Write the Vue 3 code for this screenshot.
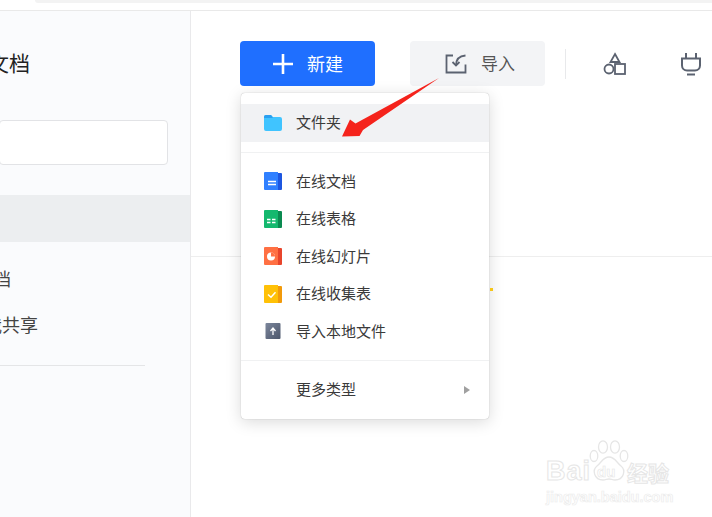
<script setup>
const items = [
  { label: '在线文档', kind: 'doc' },
  { label: '在线表格', kind: 'sheet' },
  { label: '在线幻灯片', kind: 'slide' },
  { label: '在线收集表', kind: 'form' },
  { label: '导入本地文件', kind: 'upload' },
]
</script>

<template>
  <div class="page">
    <header class="topbar"><div class="address"></div></header>
    <div class="body">
      <aside class="sidebar">
        <h1 class="title">文档</h1>
        <div class="search"></div>
        <div class="selected"></div>
        <div class="nav nav-docs">我的文档</div>
        <div class="nav nav-shared">与我共享</div>
        <div class="side-rule"></div>
      </aside>
      <main class="main">
        <div class="toolbar">
          <button class="btn primary">
            <svg width="22" height="22" viewBox="0 0 22 22"><path d="M11 1v20M1 11h20" stroke="#fff" stroke-width="2.600" fill="none"/></svg>
            <span>新建</span>
          </button>
          <button class="btn secondary">
            <svg width="22" height="22" viewBox="0 0 22 22" fill="none" stroke="#5b6270" stroke-width="1.800">
              <path d="M8 2.500H1.500v17h19v-8"/>
              <path d="M20.500 2.500C14 3 11 6.500 11 12.500"/>
              <path d="M7.500 9l3.500 3.500L14.500 9"/>
            </svg>
            <span>导入</span>
          </button>
          <div class="vrule"></div>
          <svg class="tool shapes" width="23" height="24" viewBox="0 0 23 24" fill="none" stroke="#5b6270" stroke-width="1.800">
            <path d="M12 2l4.500 8h-9z"/>
            <circle cx="6" cy="17" r="4.500"/>
            <rect x="12" y="12" width="10" height="10"/>
          </svg>
          <svg class="tool plug" width="22" height="24" viewBox="0 0 22 24" fill="none" stroke="#5b6270" stroke-width="2">
            <path d="M6 1v6M16 1v6" />
            <path d="M2 6.500h18v7a5 5 0 0 1-5 5H7a5 5 0 0 1-5-5z"/>
            <path d="M7 22.500h8"/>
          </svg>
        </div>
        <div class="main-rule"></div>
      </main>
    </div>

    <div class="menu">
      <div class="row active">
        <svg class="icon" width="20" height="18" viewBox="0 0 20 18">
          <path d="M1 3a2 2 0 0 1 2-2h5l2 2h7a2 2 0 0 1 2 2v10a2 2 0 0 1-2 2H3a2 2 0 0 1-2-2z" fill="#40c4ff"/>
          <path d="M1 3a2 2 0 0 1 2-2h5l2 3H1z" fill="#2a9ff0"/>
        </svg>
        <span>文件夹</span>
      </div>
      <div class="menu-rule"></div>
      <div v-for="item in items" :key="item.kind" class="row">
        <svg class="icon" width="20" height="20" viewBox="0 0 20 20">
          <template v-if="item.kind === 'doc'">
            <rect x="3" y="2" width="16" height="17" rx="1" fill="#1d56e0"/>
            <path d="M1 2a1 1 0 0 1 1-1h13v18H2a1 1 0 0 1-1-1z" fill="#3080ff"/>
            <path d="M5 10.500h8M5 13.500h8" stroke="#fff" stroke-width="1.400"/>
          </template>
          <template v-else-if="item.kind === 'sheet'">
            <rect x="3" y="2" width="16" height="17" rx="1" fill="#0a8a50"/>
            <path d="M1 2a1 1 0 0 1 1-1h13v18H2a1 1 0 0 1-1-1z" fill="#14b86e"/>
            <path d="M4 10.500h3.500M9 10.500h3.500M4 13.500h3.500M9 13.500h3.500" stroke="#fff" stroke-width="1.400"/>
          </template>
          <template v-else-if="item.kind === 'slide'">
            <rect x="3" y="2" width="16" height="17" rx="1" fill="#e8452c"/>
            <path d="M1 2a1 1 0 0 1 1-1h13v18H2a1 1 0 0 1-1-1z" fill="#ff7043"/>
            <circle cx="8" cy="10.500" r="4" fill="#fff"/>
            <path d="M8 10.500V6.500a4 4 0 0 1 4 4z" fill="#ff7043"/>
          </template>
          <template v-else-if="item.kind === 'form'">
            <rect x="3" y="2" width="16" height="17" rx="1" fill="#f29a0a"/>
            <path d="M1 2a1 1 0 0 1 1-1h13v18H2a1 1 0 0 1-1-1z" fill="#ffc107"/>
            <path d="M5 10.500l3 2.800 4.500-5" stroke="#fff" stroke-width="1.500" fill="none"/>
          </template>
          <template v-else>
            <defs>
              <linearGradient id="upg" x1="0" y1="0" x2="1" y2="1">
                <stop offset="0" stop-color="#7c879c"/>
                <stop offset="1" stop-color="#4c566b"/>
              </linearGradient>
            </defs>
            <rect x="2.500" y="2" width="15" height="16" rx="1" fill="url(#upg)"/>
            <path d="M10 14V8M7.500 10l2.500-3 2.500 3" stroke="#fff" stroke-width="1.300" fill="none"/>
          </template>
        </svg>
        <span>{{ item.label }}</span>
      </div>
      <div class="menu-rule"></div>
      <div class="row more">
        <span class="more-label">更多类型</span>
        <i class="caret"></i>
      </div>
    </div>

    <i class="speck"></i>

    <svg class="pointer" width="100" height="62" viewBox="340 76 100 62">
      <path d="M342 136.500L350 119.500L355.500 123.500L439 78L363 130L359.500 136z" fill="#f5231c"/>
    </svg>

    <div class="watermark">
      <svg class="paw" width="40" height="42" viewBox="0 0 40 42" fill="#fff" stroke="#e6e6e6" stroke-width="1.300">
        <ellipse cx="5" cy="16" rx="3.800" ry="5.500"/>
        <ellipse cx="14" cy="7" rx="4.500" ry="6.200"/>
        <ellipse cx="26" cy="7" rx="4.500" ry="6.200"/>
        <ellipse cx="35" cy="16" rx="3.800" ry="5.500"/>
        <path d="M20 17c6 0 7 5 12 9 5 4 3 14-6 14-2.500 0-4-1-6-1s-3.500 1-6 1c-9 0-11-10-6-14 5-4 6-9 12-9z"/>
      </svg>
      <div class="wm-line">
        <span class="wm-bai">Bai</span>
        <span class="wm-du">du</span>
        <span class="wm-cn">经验</span>
      </div>
      <div class="wm-url">jingyan.baidu.com</div>
    </div>
  </div>
</template>

<style>
html, body { margin: 0; padding: 0; background: #fff; }
</style>

<style scoped>
.page {
  position: relative;
  width: 712px;
  height: 517px;
  overflow: hidden;
  background: #fff;
  font-family: "Noto Sans CJK SC", "Liberation Sans", sans-serif;
  color: #333;
}
.topbar {
  height: 10px;
  border-bottom: 1px solid #e9e9e9;
}
.address {
  height: 3px;
  margin-left: 35px;
  background: #f3f3f3;
  border-bottom-left-radius: 4px;
}
.body { display: flex; height: 506px; }
.sidebar {
  width: 190px;
  flex: none;
  background: #fafbfd;
  border-right: 1px solid #e9e9eb;
  overflow: hidden;
}
.title {
  margin: 36px 0 0 -12px;
  font-size: 21px;
  line-height: 30px;
  font-weight: 400;
  color: #222;
  white-space: nowrap;
}
.search {
  box-sizing: border-box;
  width: 169px;
  height: 45px;
  margin: 43px 0 0 -1px;
  background: #fff;
  border: 1px solid #e2e3e6;
  border-radius: 4px;
}
.selected { height: 47px; margin-top: 30px; background: #eceef0; }
.nav {
  font-size: 18px;
  line-height: 26px;
  color: #444;
  white-space: nowrap;
}
.nav-docs { margin: 23px 0 0 -61px; }
.nav-shared { margin: 20px 0 0 -34px; }
.side-rule { width: 145px; height: 1px; margin-top: 28px; background: #e4e5e7; }

.main { flex: 1; min-width: 0; }
.toolbar {
  display: flex;
  align-items: center;
  height: 45px;
  margin: 30px 0 0 49px;
}
.btn {
  display: flex;
  align-items: center;
  justify-content: center;
  box-sizing: border-box;
  width: 135px;
  height: 45px;
  padding: 0;
  border: 0;
  border-radius: 4px;
  font: inherit;
  font-size: 17px;
}
.btn span { line-height: 24px; margin-bottom: 2px; }
.primary { gap: 13px; background: #1f6fff; color: #fff; font-size: 18px; }
.secondary { gap: 14px; margin-left: 35px; padding-left: 5px; background: #f3f4f6; color: #555; }
.vrule { width: 1px; height: 30px; margin-left: 20px; background: #e8e9eb; }
.tool { flex: none; }
.shapes { margin-left: 37px; }
.plug { margin-left: 54px; }
.main-rule { height: 1px; margin-top: 170px; background: #eeeeee; }

.menu {
  position: absolute;
  left: 241px;
  top: 93px;
  box-sizing: border-box;
  width: 248px;
  height: 326px;
  padding: 11px 0;
  background: #fff;
  border-radius: 4px;
  box-shadow: 0 0 1px rgba(0,0,0,.35), 0 3px 16px rgba(0,0,0,.15);
  font-size: 15px;
  color: #3a3a3a;
}
.row {
  display: flex;
  align-items: center;
  height: 37.5px;
  padding-left: 22px;
  white-space: nowrap;
}
.row.active { background: #f1f2f4; }
.icon { flex: none; margin-right: 13px; }
.row span { line-height: 20px; margin-bottom: 1px; }
.menu-rule { height: 1px; margin: 10px 0; background: #f0f1f2; }
.more { justify-content: space-between; padding: 0 19px 0 55px; }
.caret {
  width: 0;
  height: 0;
  border-left: 6px solid #a0a0a0;
  border-top: 4.5px solid transparent;
  border-bottom: 4.5px solid transparent;
}
.speck {
  position: absolute;
  left: 490px;
  top: 288px;
  width: 3px;
  height: 3px;
  background: #f5c518;
}
.pointer { position: absolute; left: 340px; top: 76px; }

.watermark {
  position: absolute;
  left: 546px;
  top: 440px;
  width: 128px;
  height: 64px;
  color: #fff;
}
.paw { position: absolute; left: 43px; top: 0; }
.wm-line { position: absolute; inset: 0; }
.wm-line span {
  position: absolute;
  -webkit-text-stroke: 1px #e6e6e6;
  font-family: "Liberation Sans", sans-serif;
  font-weight: 700;
}
.wm-line .wm-cn { font-family: "Noto Sans CJK SC", sans-serif; }
.wm-bai { left: 0; top: 15px; font-size: 27px; line-height: 32px; letter-spacing: 1px; }
.wm-du { left: 51px; top: 23px; font-size: 15px; line-height: 18px; color: #fff; -webkit-text-stroke-width: .6px !important; }
.wm-cn { left: 81px; top: 20px; font-size: 21px; line-height: 24px; }
.wm-url {
  position: absolute;
  left: 0;
  top: 48px;
  font-family: "Liberation Sans", sans-serif;
  font-size: 14.500px;
  line-height: 18px;
  font-weight: 700;
  white-space: nowrap;
  -webkit-text-stroke: .7px #ececec;
}
</style>
